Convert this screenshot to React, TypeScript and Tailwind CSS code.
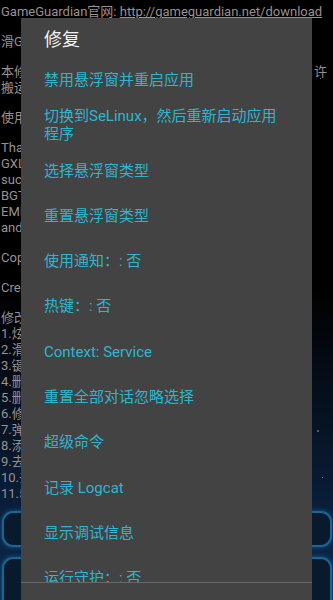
import React from "react";

const bgFont = { fontFamily: 'Roboto, "Noto Sans CJK SC", sans-serif' };

function Para({ lines, last }: { lines: React.ReactNode[]; last?: boolean }) {
  return (
    <div className={last ? "" : "mb-[14px]"}>
      {lines.map((l, i) => (
        <div key={i} className="h-[16px] leading-[16px] whitespace-nowrap overflow-hidden">
          {l}
        </div>
      ))}
    </div>
  );
}

const items = [
  "禁用悬浮窗并重启应用",
  "切换到SeLinux，然后重新启动应用程序",
  "选择悬浮窗类型",
  "重置悬浮窗类型",
  "使用通知：: 否",
  "热键：: 否",
  "Context: Service",
  "重置全部对话忽略选择",
  "超级命令",
  "记录 Logcat",
  "显示调试信息",
  "运行守护：: 否",
];

export default function App() {
  return (
    <div
      className="relative w-[333px] h-[600px] overflow-hidden bg-[linear-gradient(to_bottom,#000_0%,#000_48%,#06111f_68%,#0a2140_88%,#0c2a4e_100%)] text-[13px] text-[#9a9090]"
      style={bgFont}
    >
      <div className="pt-[4px] pl-[1px] flex flex-col">
        <Para
          lines={[
            <span>
              GameGuardian官网: <span className="underline">http://gameguardian.net/download</span>
            </span>,
          ]}
        />
        <Para lines={["滑GG修改器 - 游戏修改工具"]} />
        <Para
          lines={[
            <div className="flex justify-between pr-[6px]">
              <span className="min-w-0 overflow-hidden">本修改版仅供学习交流使用，禁止用于</span>
              <span className="shrink-0">许</span>
            </div>,
            "搬运请注明出处",
          ]}
        />
        <Para lines={["使用前请阅读说明"]} />
        <Para
          lines={[
            "Thanks to:",
            "GXL, enyby, d2dyno",
            "success, AlexHenry",
            "BGT, Lithium",
            "EMI, Shinobi",
            "and others",
          ]}
        />
        <Para lines={["Copyright © GameGuardian"]} />
        <Para lines={["Created by enyby"]} />
        <Para
          last
          lines={[
            "修改内容：",
            "1.炫彩主题界面",
            "2.滑动悬浮窗",
            "3.键盘优化",
            "4.删除广告",
            "5.删除更新检测",
            "6.修复部分问题",
            "7.弹窗提示优化",
            "8.添加中文翻译",
            "9.去除多余权限",
            "10.去除统计",
            "11.5.0 版本适配",
          ]}
        />
        <div className="mt-[9px] mx-[1px] flex flex-col gap-[10px]">
          <div className="h-[36px] rounded-[11px] border-2 border-[#1a6594] bg-[#081a2c] shadow-[0_0_5px_#175a85]" />
          <div className="h-[60px] rounded-[11px] border-2 border-[#1a6594] bg-[#081a2c] shadow-[0_0_5px_#175a85]" />
        </div>
      </div>

      <div className="absolute left-[317px] top-[430px] w-[2px] h-[2px] rounded-full bg-[#5a7090]" />
      <div className="absolute left-[322px] top-[477px] w-[1px] h-[1px] bg-[#5a7090]" />
      <div className="absolute left-[320px] top-[78px] w-[1px] h-[1px] bg-[#777]" />

      <div
        className="absolute left-[21px] top-[18px] w-[291px] bottom-0 bg-[#434343] flex flex-col"
        style={bgFont}
      >
        <div className="h-[39.35px] pt-[12px] pl-[23px] text-[18px] leading-[20px] text-[#f2f2f2] shrink-0">
          修复
        </div>
        <div className="h-[524.65px] overflow-hidden shrink-0 flex flex-col">
          {items.map((t, i) => (
            <div
              key={i}
              className="min-h-[45.3px] flex items-center pl-[23px] pr-[24px] text-[15px] leading-[18px] text-[#2fb5d0]"
            >
              {t}
            </div>
          ))}
        </div>
        <div className="h-[1px] bg-[#686868] shrink-0" />
      </div>
    </div>
  );
}
